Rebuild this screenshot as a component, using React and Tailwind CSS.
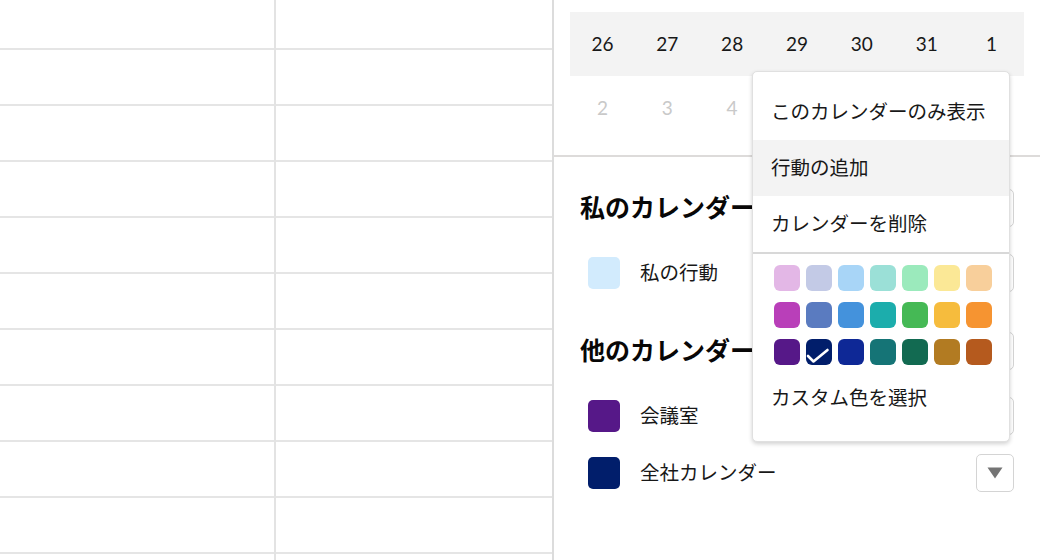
import React from "react";

const font = { fontFamily: '"Lato", "Noto Sans CJK JP", sans-serif' };

function Caret() {
  return (
    <button className="w-[38px] h-[38px] rounded-[5px] border-[1.5px] border-[#d4d4d4] bg-white flex items-center justify-center">
      <svg width="16" height="12" viewBox="0 0 16 12">
        <path d="M0.5 0.5 L15.5 0.5 L8 11.5 Z" fill="#747474" />
      </svg>
    </button>
  );
}

const pastel = ["#e3b7e6", "#c3cae6", "#a8d5f7", "#9be0d7", "#9beabc", "#fbe896", "#f8cf9b"];
const mid = ["#b93fb9", "#5a7bc0", "#4492dc", "#1cadac", "#45b955", "#f6bc3d", "#f69431"];
const dark = ["#561888", "#011e6b", "#0e2896", "#157476", "#126a51", "#b27b22", "#b55a1e"];

function Swatch({ color, checked }) {
  return (
    <div className="w-[26px] h-[26px] rounded-[6px] relative" style={{ backgroundColor: color }}>
      {checked && (
        <svg className="absolute inset-0" width="26" height="26" viewBox="0 0 26 26">
          <path d="M2 17 L7.5 22.5 L21.5 11" fill="none" stroke="white" strokeWidth="2.6" strokeLinecap="round" strokeLinejoin="round" />
        </svg>
      )}
    </div>
  );
}

function CalItem({ color, label }) {
  return (
    <div className="h-[38px] flex items-center justify-between">
      <div className="flex items-center pl-2">
        <div className="w-8 h-8 rounded-[5px]" style={{ backgroundColor: color }} />
        <span className="ml-5 text-[19.5px] text-[#181818]">{label}</span>
      </div>
      <Caret />
    </div>
  );
}

function Heading({ label }) {
  return (
    <div className="h-[38px] flex items-center justify-between">
      <span className="text-[25px] font-bold text-[#080707] whitespace-nowrap">{label}</span>
      <Caret />
    </div>
  );
}

export default function App() {
  const rowsTop = [26, 27, 28, 29, 30, 31, 1];
  const rowsBottom = ["2", "3", "4", "", "", "", ""];
  const gridRows = Array.from({ length: 10 });
  return (
    <div className="w-[1040px] h-[560px] overflow-hidden bg-white flex" style={font}>
      {/* left grid */}
      <div className="flex h-full">
        {[0, 1].map((c) => (
          <div
            key={c}
            className={
              c === 0
                ? "w-[276px] h-full border-r-2 border-[#e3e3e3] flex flex-col"
                : "w-[278px] h-full border-r-2 border-[#dcdcdc] flex flex-col"
            }
          >
            {gridRows.map((_, i) => (
              <div
                key={i}
                className={
                  i === 0
                    ? "h-[50px] shrink-0 border-b-2 border-[#e5e5e5]"
                    : "h-[56px] shrink-0 border-b-2 border-[#e5e5e5]"
                }
              />
            ))}
          </div>
        ))}
      </div>

      {/* right panel */}
      <div className="flex-1 relative h-full">
        <div className="px-4 pt-3 pb-[15px] border-b-2 border-[#dddbda]">
          <div className="grid grid-cols-7 h-16 bg-[#f3f3f3] items-center">
            {rowsTop.map((n) => (
              <div key={n} className="text-center text-[19px] text-[#181818]">
                {n}
              </div>
            ))}
          </div>
          <div className="grid grid-cols-7 h-16 items-center">
            {rowsBottom.map((n, i) => (
              <div key={i} className="text-center text-[19px] text-[#c9c9c9]">
                {n}
              </div>
            ))}
          </div>
        </div>

        <div className="pl-[26px] pr-[26px] pt-8">
          <Heading label="私のカレンダー" />
          <div className="mt-[27px]">
            <CalItem color="#d2ebfd" label="私の行動" />
          </div>
          <div className="mt-10">
            <Heading label="他のカレンダー" />
          </div>
          <div className="mt-[27px] flex flex-col gap-[19px]">
            <CalItem color="#561888" label="会議室" />
            <CalItem color="#011e6b" label="全社カレンダー" />
          </div>
        </div>

        {/* dropdown menu */}
        <div className="absolute left-[198px] top-[71px] w-[258px] h-[371px] bg-white border border-[#e0e0e0] rounded-[5px] shadow-[0_2px_4px_rgba(0,0,0,0.18)] py-3 text-[19.5px] text-[#181818]">
          <div className="h-14 flex items-center pl-[18px]">このカレンダーのみ表示</div>
          <div className="h-14 flex items-center pl-[18px] bg-[#f3f3f3]">行動の追加</div>
          <div className="h-[58px] flex items-center pl-[18px] border-b-2 border-[#d8d8d8]">カレンダーを削除</div>
          <div className="pl-[21px] pt-[11px] flex flex-col gap-[11px]">
            {[pastel, mid, dark].map((row, ri) => (
              <div key={ri} className="flex gap-[6px]">
                {row.map((c, ci) => (
                  <Swatch key={ci} color={c} checked={ri === 2 && ci === 1} />
                ))}
              </div>
            ))}
          </div>
          <div className="h-14 mt-[5px] flex items-center pl-[18px]">カスタム色を選択</div>
        </div>
      </div>
    </div>
  );
}
